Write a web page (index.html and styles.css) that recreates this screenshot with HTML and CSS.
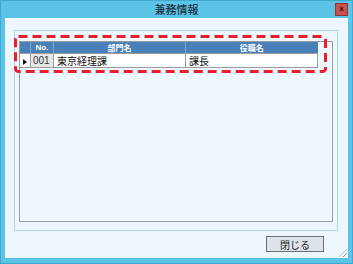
FILE: index.html
```html
<!DOCTYPE html>
<html lang="ja">
<head>
  <meta charset="UTF-8" />
  <title>兼務情報</title>
  <link rel="stylesheet" href="styles.css">
</head>
<body>
  <div class="window">
    <div class="titlebar">
      <span class="title">兼務情報</span>
      <span class="close">x</span>
    </div>
    <div class="client">
      <div class="panel">
        <div class="grid">
          <table class="list">
            <thead>
              <tr>
                <th class="rh"></th>
                <th class="no">No.</th>
                <th class="dept">部門名</th>
                <th class="post">役職名</th>
              </tr>
            </thead>
            <tbody>
              <tr>
                <td class="rh"><span class="arrow"></span></td>
                <td class="no">001</td>
                <td>東京経理課</td>
                <td>課長</td>
              </tr>
            </tbody>
          </table>
        </div>
      </div>
      <div class="footer">
        <button class="btn">閉じる</button>
      </div>
      <span class="grip"></span>
    </div>
  </div>

  <!-- annotation -->
  <svg class="mark" width="315" height="40" viewBox="0 0 315 40">
    <rect x="1.5" y="1.5" width="310" height="35" rx="3" fill="none" stroke="#e8202a" stroke-width="3" stroke-dasharray="9 5" />
  </svg>
</body>
</html>
```

FILE: styles.css
```css
body {
  margin: 0;
  font-family: "Noto Sans CJK JP", "Noto Sans", sans-serif;
  font-size: 10px;
  color: #111;
  position: relative;
}
.window {
  width: 353px;
  height: 264px;
  box-sizing: border-box;
  background: #5cc5e7;
  border: 1px solid #3fa9cf;
  padding: 0 4px 5px 4px;
  display: flex;
  flex-direction: column;
}
.titlebar {
  height: 17px;
  display: flex;
  align-items: center;
  justify-content: center;
  position: relative;
}
.title {
  font-size: 11px;
  color: #1f3246;
  line-height: 1;
  font-weight: 500;
}
.close {
  position: absolute;
  right: 0;
  top: 2px;
  width: 13px;
  height: 13px;
  box-sizing: border-box;
  background: #c9504c;
  border: 1px solid #8e3632;
  color: #3a1210;
  font-size: 7px;
  line-height: 10px;
  text-align: center;
  font-family: "DejaVu Sans", sans-serif;
  font-weight: bold;
}
.client {
  flex: 1;
  background: #eef7fd;
  display: flex;
  flex-direction: column;
  position: relative;
}
.panel {
  margin: 12px 0 0 9px;
  width: 324px;
  height: 201px;
  box-sizing: border-box;
  border: 1px solid #a8d6ee;
  padding: 10px 4px 8px 4px;
}
.grid {
  height: 100%;
  box-sizing: border-box;
  border: 1px solid #9c9c9c;
}
.list {
  border-collapse: collapse;
  table-layout: fixed;
  width: 298px;
}
.list th {
  background: #4a80b8;
  color: #fff;
  font-size: 8px;
  font-weight: bold;
  height: 11px;
  padding: 0;
  line-height: 11px;
  border-left: 1px solid #7ea6cf;
}
.list th.rh {
  border-left: none;
}
.list th.no {
  font-family: "Liberation Sans", sans-serif;
}
.list td {
  background: #fff;
  height: 13px;
  padding: 0 3px;
  line-height: 13px;
  border: 1px solid #9c9c9c;
  white-space: nowrap;
}
.list .rh {
  width: 10px;
  padding: 0;
}
.list td.rh {
  border-left: none;
  text-align: center;
}
.list .no {
  width: 22px;
}
.list td.no {
  background: #e6e6e6;
  color: #333;
  padding: 0 2px;
  font-family: "Liberation Sans", sans-serif;
}
.arrow {
  display: inline-block;
  width: 0;
  height: 0;
  border-top: 3px solid transparent;
  border-bottom: 3px solid transparent;
  border-left: 4px solid #111;
  vertical-align: middle;
}
.footer {
  display: flex;
  justify-content: flex-end;
  padding: 5px 24px 0 0;
}
.btn {
  width: 58px;
  height: 16px;
  box-sizing: border-box;
  background: #dce3ea;
  border: 1px solid #6f6f6f;
  font-family: inherit;
  font-size: 10px;
  color: #222;
  padding: 0;
  line-height: 13px;
}
.grip {
  position: absolute;
  right: 1px;
  bottom: 1px;
  width: 8px;
  height: 8px;
  background: repeating-linear-gradient(135deg, transparent 0 2px, #8aa0b0 2px 3px);
  clip-path: polygon(100% 0, 100% 100%, 0 100%);
}
.mark {
  position: absolute;
  left: 14px;
  top: 35px;
}
```
